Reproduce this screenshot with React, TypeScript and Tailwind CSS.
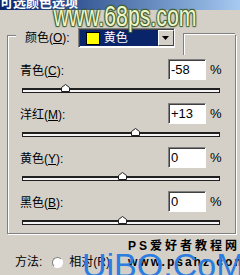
import React from "react";

const sliders = [
    { name: "青色", key: "C", value: -58 },
    { name: "洋红", key: "M", value: 13 },
    { name: "黄色", key: "Y", value: 0 },
    { name: "黑色", key: "B", value: 0 },
];

function Thumb({ value }: { value: number }) {
    // track is 198px wide, 0 sits in the middle
    const left = 99 + (value / 100) * 99 - 4;
    return (
        <svg
            width="9"
            height="8"
            viewBox="0 0 9 8"
            className="absolute bottom-0"
            style={{ left }}
        >
            <path d="M0.5 3.5 L4.5 0.5 L8.5 3.5 L8.5 7.5 L0.5 7.5 Z" fill="#fff" stroke="#202020" />
        </svg>
    );
}

function SliderRow({ name, hotkey, value }: { name: string; hotkey: string; value: number }) {
    const text = value > 0 ? `+${value}` : `${value}`;
    return (
        <div className="mb-[10px]">
            <div className="flex items-center h-[21px] pl-[12px]">
                <span className="w-[148px] leading-none pt-[3px]">
                    {name}(<span className="underline">{hotkey}</span>):
                </span>
                <div className="w-[38px] h-[21px] bg-white border border-t-[#808080] border-l-[#808080] border-b-white border-r-white shadow-[inset_1px_1px_0_#404040] flex items-center pl-[2px] text-[13px]">
                    {text}
                </div>
                <span className="ml-[4px] text-[13px]">%</span>
            </div>
            <div className="relative ml-[14px] mt-[8px] w-[198px] h-[5px] bg-[#f4f4f4] border border-[#202020] border-t-2">
                <Thumb value={value} />
            </div>
        </div>
    );
}

export default function App() {
    return (
        <div className="relative w-[240px] h-[275px] overflow-hidden bg-[#d4d0c8] text-[12px] text-black font-['Liberation_Sans','Noto_Sans_CJK_SC',sans-serif]">
            {/* title bar, cut at the top */}
            <div className="h-[10px] overflow-hidden bg-linear-to-r from-[#0a246a] to-[#a6caf0]">
                <div className="-mt-[4px] text-white font-bold text-[13px] leading-[13px]">可选颜色选项</div>
            </div>

            {/* group box */}
            <div className="ml-[7px] mt-[25px] w-[229px] h-[199px] border border-[#808080] shadow-[inset_1px_1px_0_#fff,1px_1px_0_#fff]">
                <div className="-mt-[8px] ml-[8px] h-[20px] flex items-start bg-[#d4d0c8]">
                    <span className="ml-[9px] mt-[4px] w-[61px] leading-none">
                        颜色(<span className="underline">O</span>):
                    </span>
                    <div className="w-[98px] h-[20px] flex items-center bg-white border border-t-[#808080] border-l-[#808080] border-b-white border-r-white shadow-[inset_1px_1px_0_#404040]">
                        <div className="ml-[1px] w-[78px] h-[16px] bg-[#0a246a] flex items-center">
                            <div className="ml-[6px] w-[14px] h-[13px] bg-[#ffff00] border border-black" />
                            <span className="ml-[4px] text-white leading-none">黄色</span>
                        </div>
                        <div className="w-[16px] h-[16px] bg-[#d4d0c8] border border-t-white border-l-white border-b-[#404040] border-r-[#404040] flex items-center justify-center">
                            <svg width="7" height="4" viewBox="0 0 7 4">
                                <path d="M0 0 H7 L3.5 4 Z" fill="#000" />
                            </svg>
                        </div>
                    </div>
                    <div className="ml-[8px] mt-[5px] w-[60px] h-[22px] border-t border-l border-[#808080] shadow-[inset_1px_1px_0_#fff]" />
                </div>

                <div className="mt-[11px]">
                    {sliders.map((s) => (
                        <SliderRow key={s.key} name={s.name} hotkey={s.key} value={s.value} />
                    ))}
                </div>
            </div>

            {/* method */}
            <div className="mt-[21px] pl-[15px] h-[14px] flex items-center">
                <span>方法:</span>
                <div className="ml-[10px] w-[11px] h-[11px] rounded-full bg-white border border-t-[#808080] border-l-[#808080] border-b-white border-r-white" />
                <span className="ml-[6px]">相对(R)</span>
            </div>

            {/* watermarks */}
            <div className="absolute left-[15px] top-[1px] w-[220px] text-center text-[30px] leading-[30px] scale-x-[0.71] text-[#eef4c8] [text-shadow:0_0_2px_#3f5f30,1px_1px_1px_#3f5f30,-1px_-1px_1px_#3f5f30,1px_-1px_1px_#3f5f30,-1px_1px_1px_#3f5f30]">
                www.68ps.com
            </div>
            <div className="absolute left-[128px] top-[240px] font-bold text-[12px] leading-[12px] tracking-[3px] whitespace-nowrap">
                PS爱好者教程网
            </div>
            <div className="absolute left-[128px] top-[256px] font-bold text-[12px] leading-[12px] tracking-[2px] whitespace-nowrap">
                www.psahz.com
            </div>
            <div className="absolute left-[82px] top-[248px] text-[34px] leading-[34px] text-[#2b7de0] whitespace-nowrap">
                UiBQ.CoM
            </div>
        </div>
    );
}
